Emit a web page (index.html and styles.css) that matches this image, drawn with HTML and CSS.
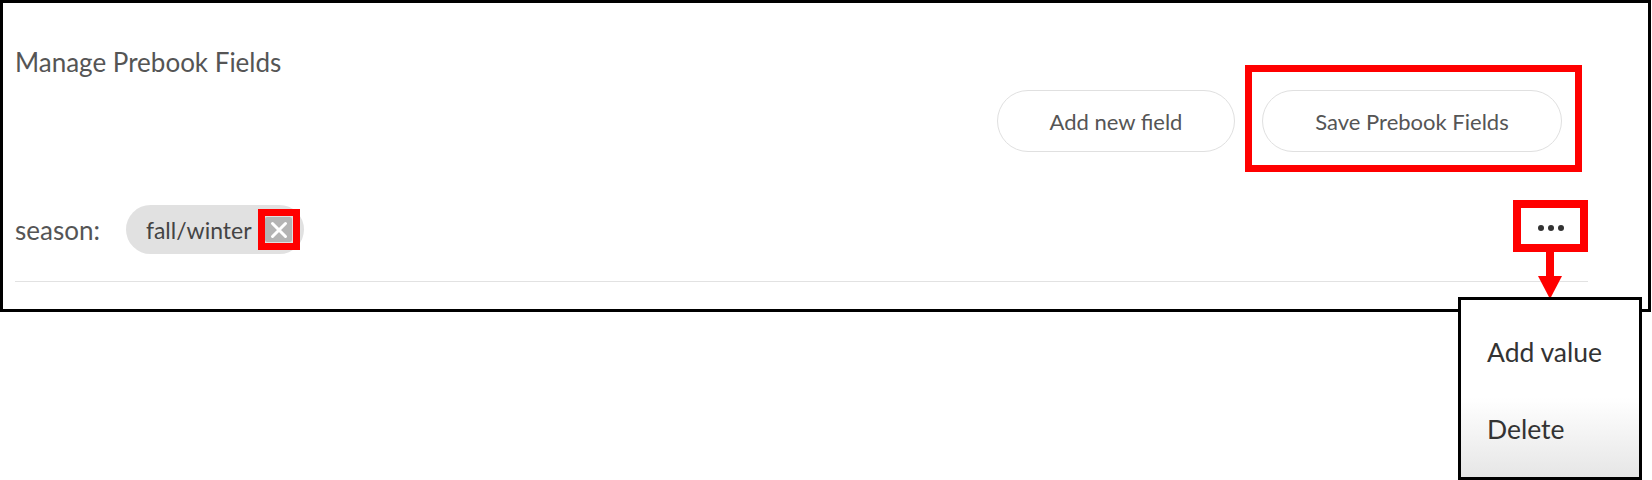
FILE: index.html
```html
<!DOCTYPE html>
<html lang="en">
<head>
<meta charset="utf-8">
<title>Manage Prebook Fields</title>
<link rel="stylesheet" href="styles.css">
</head>
<body>
<div class="frame">
  <div class="header">
    <h1 class="title">Manage Prebook Fields</h1>
    <div class="actions">
      <button class="btn btn-add">Add new field</button>
      <div class="mark mark-save">
        <button class="btn btn-save">Save Prebook Fields</button>
      </div>
    </div>
  </div>
  <div class="field-row">
    <div class="field-left">
      <span class="field-label">season:</span>
      <span class="chip">
        <span class="chip-text">fall/winter</span>
        <span class="mark mark-x">
          <span class="chip-remove">
            <svg width="18" height="18" viewBox="0 0 18 18"><path d="M2.5 2.5 L15.5 15.5 M15.5 2.5 L2.5 15.5" stroke="#fff" stroke-width="3" stroke-linecap="round"/></svg>
          </span>
        </span>
      </span>
    </div>
    <div class="mark mark-more">
      <span class="dots"><i></i><i></i><i></i></span>
    </div>
  </div>
</div>
<div class="arrow">
  <span class="arrow-shaft"></span>
  <span class="arrow-head"></span>
</div>
<div class="menu">
  <div class="menu-item">Add value</div>
  <div class="menu-item">Delete</div>
</div>
</body>
</html>
```

FILE: styles.css
```css
* { box-sizing: border-box; }
html, body { margin: 0; padding: 0; background: #fff; }
body {
  font-family: Lato, "Open Sans", "Liberation Sans", sans-serif;
  width: 1652px;
  height: 480px;
  overflow: hidden;
  position: relative;
}
.frame {
  width: 1651px;
  height: 312px;
  border: 3px solid #000;
  padding: 0 60px 0 12px;
}
.header {
  display: flex;
  justify-content: space-between;
  align-items: flex-start;
}
.title {
  margin: 44px 0 0 0;
  font-size: 26px;
  line-height: 30px;
  font-weight: 400;
  color: #555;
}
.actions {
  display: flex;
  align-items: flex-start;
  gap: 10px;
  margin-top: 62px;
  margin-right: 6px;
}
.btn {
  font-family: inherit;
  font-size: 22px;
  color: #555;
  background: #fff;
  border: 1px solid #e0e0e0;
  border-radius: 31px;
  height: 62px;
  padding: 0;
  cursor: pointer;
}
.btn-add { width: 238px; margin-top: 25px; }
.btn-save { width: 300px; }
.mark { border: 7px solid #f00; }
.mark-save { padding: 18px 13px 13px 10px; }
.field-row {
  display: flex;
  justify-content: space-between;
  align-items: flex-start;
  margin-top: 28px;
  padding-bottom: 27px;
  border-bottom: 1px solid #e2e2e2;
}
.field-left {
  display: flex;
  align-items: center;
  gap: 26px;
  margin-top: 5px;
}
.field-label {
  font-size: 26px;
  color: #555;
}
.chip {
  display: flex;
  align-items: center;
  height: 49px;
  border-radius: 25px;
  background: #e1e1e1;
  padding: 0 4px 0 20px;
}
.chip-text {
  font-size: 23px;
  color: #444;
  margin-right: 6px;
}
.mark-x {
  flex: none;
  width: 42px;
  height: 41px;
  display: flex;
  align-items: center;
  justify-content: center;
}
.chip-remove {
  width: 27px;
  height: 25px;
  background: #b4b4b4;
  border-radius: 2px;
  display: flex;
  align-items: center;
  justify-content: center;
}
.mark-more {
  flex: none;
  width: 75px;
  height: 52px;
  border-width: 8px;
  display: flex;
  align-items: center;
  justify-content: center;
}
.dots { display: flex; gap: 4px; margin-top: 4px; }
.dots i {
  display: block;
  width: 6px;
  height: 6px;
  border-radius: 50%;
  background: #333;
}
.arrow {
  position: absolute;
  left: 1538px;
  top: 252px;
  width: 24px;
  height: 47px;
  display: flex;
  flex-direction: column;
  align-items: center;
}
.arrow-shaft {
  display: block;
  width: 8px;
  height: 24px;
  background: #f00;
}
.arrow-head {
  display: block;
  width: 0;
  height: 0;
  border-left: 12px solid transparent;
  border-right: 12px solid transparent;
  border-top: 23px solid #f00;
}
.menu {
  position: absolute;
  left: 1458px;
  top: 297px;
  width: 184px;
  height: 183px;
  border: 3px solid #000;
  background: linear-gradient(to bottom, #fff 0%, #fff 55%, #e6e6e6 100%);
  padding: 14px 0 0 26px;
  z-index: 2;
}
.menu-item {
  font-size: 26.5px;
  line-height: 77px;
  color: #333;
}
```
